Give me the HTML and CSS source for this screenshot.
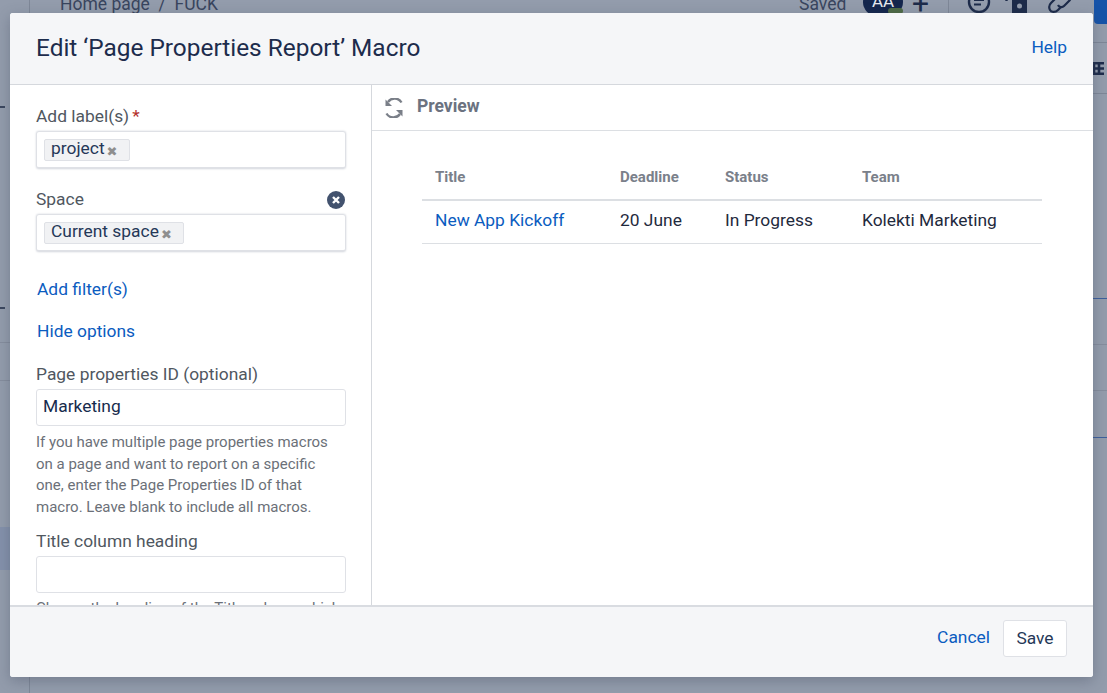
FILE: index.html
```html
<!DOCTYPE html>
<html lang="en">
<head>
    <meta charset="UTF-8">
    <meta name="viewport" content="width=device-width, initial-scale=1.0">
    <title>Edit Page Properties Report Macro</title>
    <link rel="stylesheet" href="styles.css">
</head>
<body>
    <!-- Editor page dimmed behind the dialog -->
    <div class="backdrop">
        <div class="bg-rail"></div>
        <div class="bg-crumbs">Home page &nbsp;/&nbsp; FUCK</div>
        <div class="bg-saved">Saved</div>
        <div class="bg-avatar">AA</div>
        <div class="bg-presence"></div>
        <div class="bg-plus">+</div>
        <div class="bg-divider"></div>
        <svg class="bg-icon bg-comment" viewBox="0 0 24 24"><circle cx="12" cy="12" r="10" fill="none" stroke="#1d2b4a" stroke-width="2.4"/><path d="M7 10h10M7 14.500h7" stroke="#1d2b4a" stroke-width="2.2"/></svg>
        <svg class="bg-icon bg-lock" viewBox="0 0 24 24"><path d="M7 9h15v15H7z" fill="#1d2b4a"/><circle cx="14.500" cy="16" r="2.500" fill="#939cac"/><path d="M1.500 0v11" stroke="#1d2b4a" stroke-width="2.400"/></svg>
        <svg class="bg-icon bg-link" viewBox="0 0 24 24"><path d="M11 7l3-3c3-3 7-2 8 0s1 5-1 7l-5 5c-2 2-5 1-6-1" fill="none" stroke="#1d2b4a" stroke-width="2.200"/><path d="M13 17l-3 3c-3 3-7 2-8 0s-1-5 1-7l5-5c2-2 5-1 6 1" fill="none" stroke="#1d2b4a" stroke-width="2.200"/></svg>
        <div class="bg-publish"></div>
        <div class="bg-line line-top"></div>
        <div class="bg-line line-tool"></div>
        <svg class="bg-table" viewBox="0 0 11 13"><path d="M1 1.300h12v10.400H1zM6 1v11M1 6.500h12" fill="none" stroke="#1d2b4a" stroke-width="2.600"/></svg>
        <div class="bg-blue blue-a"></div>
        <div class="bg-blue blue-b"></div>
        <div class="bg-grey grey-a"></div>
        <div class="bg-grey grey-b"></div>
        <div class="bg-tick tick-a"></div>
        <div class="bg-tick tick-b"></div>
        <div class="bg-rule rule-a"></div>
        <div class="bg-rule rule-b"></div>
        <div class="bg-selected"></div>
    </div>

    <div class="dialog">
        <header class="dialog-header">
            <h1>Edit ‘Page Properties Report’ Macro</h1>
            <a class="link" href="#">Help</a>
        </header>

        <div class="dialog-body">
            <form class="options">
                <div class="field">
                    <label>Add label(s)<span class="required">*</span></label>
                    <div class="picker">
                        <span class="tag">project<span class="tag-x">✖</span></span>
                    </div>
                </div>

                <div class="field">
                    <div class="label-row">
                        <label>Space</label>
                        <svg class="clear-icon" viewBox="0 0 18 18">
                            <circle cx="9" cy="9" r="9" fill="#42526e"/>
                            <path d="M6 6l6 6M12 6l-6 6" stroke="#fff" stroke-width="2.4"/>
                        </svg>
                    </div>
                    <div class="picker">
                        <span class="tag">Current space<span class="tag-x">✖</span></span>
                    </div>
                </div>

                <a class="link option-link first" href="#">Add filter(s)</a>
                <a class="link option-link" href="#">Hide options</a>

                <div class="field props-field">
                    <label>Page properties ID (optional)</label>
                    <input class="text-input" type="text" value="Marketing">
                    <p class="hint">If you have multiple page properties macros on a page and want to report on a specific one, enter the Page Properties ID of that macro. Leave blank to include all macros.</p>
                </div>

                <div class="field title-field">
                    <label>Title column heading</label>
                    <input class="text-input" type="text">
                    <p class="hint">Choose the heading of the Title column which</p>
                </div>
            </form>

            <section class="preview">
                <div class="preview-bar">
                    <svg class="refresh-icon" viewBox="0 0 20 20">
                        <path d="M17.5 5.5A8 8 0 0 0 4 5" fill="none" stroke="#7a7f88" stroke-width="2.4" transform="translate(0 -1)"/>
                        <path d="M1.5 1.5v6.5h6.5z" fill="#7a7f88"/>
                        <path d="M2.5 14.5A8 8 0 0 0 16 15" fill="none" stroke="#7a7f88" stroke-width="2.4" transform="translate(0 1)"/>
                        <path d="M18.5 18.5v-6.5h-6.5z" fill="#7a7f88"/>
                    </svg>
                    <span>Preview</span>
                </div>
                <div class="preview-content">
                    <table class="report">
                        <thead>
                            <tr>
                                <th class="col-title">Title</th>
                                <th class="col-deadline">Deadline</th>
                                <th class="col-status">Status</th>
                                <th>Team</th>
                            </tr>
                        </thead>
                        <tbody>
                            <tr>
                                <td><a class="link" href="#">New App Kickoff</a></td>
                                <td>20 June</td>
                                <td>In Progress</td>
                                <td>Kolekti Marketing</td>
                            </tr>
                        </tbody>
                    </table>
                </div>
            </section>
        </div>

        <footer class="dialog-footer">
            <a class="link" href="#">Cancel</a>
            <button class="save-button" type="button">Save</button>
        </footer>
    </div>
</body>
</html>
```

FILE: styles.css
```css
html, body {
    height: 100%;
}
body {
    margin: 0;
    overflow: hidden;
    background-color: #939cac;
    font-family: Roboto, Arial, sans-serif;
    font-size: 17.4px;
    color: #172b4d;
}

/* Page behind the dialog */
.backdrop {
    position: absolute;
    inset: 0;
    overflow: hidden;
    color: #26344f;
}
.bg-rail {
    position: absolute;
    left: 29px;
    top: 0;
    bottom: 0;
    width: 1px;
    background-color: #7e8797;
}
.bg-crumbs, .bg-saved {
    position: absolute;
    top: -6px;
    font-size: 17.5px;
    line-height: 20px;
    color: #39455e;
}
.bg-crumbs {
    left: 60px;
}
.bg-saved {
    left: 799px;
}
.bg-avatar {
    position: absolute;
    left: 863px;
    top: -12px;
    width: 40px;
    height: 28px;
    border-radius: 14px;
    background-color: #14264d;
    color: #e6e9ef;
    font-size: 17px;
    line-height: 27px;
    text-align: center;
}
.bg-presence {
    position: absolute;
    left: 888px;
    top: 8px;
    width: 15px;
    height: 6px;
    border-radius: 3px;
    background-color: #4e6a45;
}
.bg-plus {
    position: absolute;
    left: 912px;
    top: -11px;
    font-size: 30px;
    line-height: 30px;
    color: #1d2b4a;
}
.bg-divider {
    position: absolute;
    left: 948px;
    top: 0;
    width: 1px;
    height: 13px;
    background-color: #7e8797;
}
.bg-icon {
    position: absolute;
    top: -10px;
    width: 24px;
    height: 24px;
}
.bg-comment {
    left: 967px;
}
.bg-lock {
    left: 1005px;
}
.bg-link {
    left: 1048px;
}
.bg-publish {
    position: absolute;
    left: 1094px;
    top: -6px;
    width: 20px;
    height: 30px;
    border-radius: 4px;
    background-color: #1653a8;
}
.bg-line {
    position: absolute;
    left: 1093px;
    right: 0;
    height: 1px;
    background-color: #7e8797;
}
.line-top {
    top: 42px;
}
.line-tool {
    top: 93px;
}
.bg-table {
    position: absolute;
    left: 1093px;
    top: 62px;
    width: 11px;
    height: 13px;
}
.bg-blue, .bg-grey {
    position: absolute;
    left: 1093px;
    right: 0;
    height: 1px;
}
.bg-blue {
    background-color: #3d5f9c;
}
.bg-grey {
    background-color: #858d9d;
}
.blue-a {
    top: 298px;
}
.blue-b {
    top: 437px;
}
.grey-a {
    top: 344px;
}
.grey-b {
    top: 390px;
}
.bg-tick {
    position: absolute;
    left: 0;
    width: 5px;
    height: 2px;
    background-color: #3a465e;
}
.tick-a {
    top: 106px;
}
.tick-b {
    top: 307px;
}
.bg-rule {
    position: absolute;
    left: 0;
    width: 10px;
    height: 1px;
    background-color: #858d9d;
}
.rule-a {
    top: 342px;
}
.rule-b {
    top: 380px;
}
.bg-selected {
    position: absolute;
    left: 0;
    top: 527px;
    width: 10px;
    height: 43px;
    background-color: #8491ab;
}

/* Dialog */
.dialog {
    position: absolute;
    left: 10px;
    top: 13px;
    width: 1083px;
    height: 664px;
    display: flex;
    flex-direction: column;
    border-radius: 3px;
    background-color: #fff;
    box-shadow: 0 4px 14px rgba(60, 70, 90, 0.35);
    overflow: hidden;
}
.dialog-header {
    flex: none;
    height: 72px;
    box-sizing: border-box;
    display: flex;
    justify-content: space-between;
    align-items: center;
    padding: 0 26px 2px;
    background-color: #f5f6f8;
    border-bottom: 1px solid #d5d8dd;
}
.dialog-header h1 {
    margin: 0;
    font-size: 24.4px;
    font-weight: 400;
    color: #1d2c4c;
}
.dialog-header .link {
    margin-bottom: 2px;
}
.link {
    color: #0b5cc0;
    text-decoration: none;
}
.dialog-body {
    flex: 1;
    min-height: 0;
    display: flex;
}
.dialog-footer {
    flex: none;
    height: 72px;
    box-sizing: border-box;
    display: flex;
    justify-content: flex-end;
    align-items: center;
    gap: 13px;
    padding: 0 26px 7px;
    background-color: #f5f6f8;
    border-top: 2px solid #d9dce1;
}
.dialog-footer .link {
    margin-bottom: 3px;
}
.save-button {
    width: 64px;
    height: 37px;
    padding: 0 0 2px;
    border: 1px solid #dfe1e6;
    border-radius: 3px;
    background-color: #fff;
    font-family: inherit;
    font-size: 17.4px;
    color: #253858;
}

/* Left column */
.options {
    flex: none;
    width: 362px;
    box-sizing: border-box;
    padding: 20px 25px 0 26px;
    border-right: 1px solid #d5d8dd;
    overflow: hidden;
}
.field label {
    display: block;
    line-height: 22px;
    color: #50575f;
}
.required {
    margin-left: 3px;
    color: #b3302c;
}
.label-row {
    display: flex;
    justify-content: space-between;
    align-items: center;
}
.clear-icon {
    width: 18px;
    height: 18px;
    margin-top: 2px;
    margin-right: 1px;
}
.picker {
    box-sizing: border-box;
    height: 38px;
    margin-top: 4px;
    padding: 6px 7px;
    border: 1px solid #dfe1e6;
    border-bottom-width: 2px;
    border-radius: 3px;
    box-shadow: 0 0 2px rgba(9, 30, 66, 0.2);
}
.field + .field {
    margin-top: 19px;
}
.tag {
    display: inline-flex;
    align-items: center;
    height: 22px;
    box-sizing: border-box;
    padding: 0 11px 4px 6px;
    border: 1px solid #dfe1e6;
    border-radius: 2px;
    background-color: #f1f2f4;
    font-size: 17.4px;
    line-height: 18px;
    color: #253858;
}
.tag-x {
    margin-left: 2px;
    margin-top: 8px;
    font-family: "DejaVu Sans", sans-serif;
    font-size: 13px;
    line-height: 12px;
    color: #8f8f8f;
}
.option-link {
    display: block;
    margin-left: 1px;
    margin-top: 20px;
    line-height: 22px;
}
.option-link.first {
    margin-top: 26px;
}
.props-field {
    margin-top: 21px;
}
.text-input {
    display: block;
    width: 100%;
    box-sizing: border-box;
    height: 37px;
    margin-top: 4px;
    padding: 0 6px 4px;
    border: 1px solid #dfe1e6;
    border-radius: 3px;
    outline: none;
    font-family: inherit;
    font-size: 17.4px;
    color: #172b4d;
}
.hint {
    margin: 6px 0 0;
    font-size: 15px;
    line-height: 21.5px;
    color: #6b7078;
}
.field + .title-field {
    margin-top: 12px;
}
.title-field .hint {
    margin-top: 5px;
}

/* Right column */
.preview {
    flex: 1;
    min-width: 0;
}
.preview-bar {
    height: 46px;
    box-sizing: border-box;
    display: flex;
    align-items: center;
    gap: 13px;
    padding-left: 12px;
    border-bottom: 1px solid #dcdfe3;
    font-weight: 700;
    font-size: 17.5px;
    color: #6b7280;
}
.preview-bar span {
    margin-bottom: 3px;
}
.refresh-icon {
    width: 20px;
    height: 20px;
}
.preview-content {
    padding: 30px 51px 0 50px;
}
.report {
    width: 100%;
    border-collapse: collapse;
    table-layout: fixed;
}
.report th {
    height: 39px;
    box-sizing: border-box;
    padding: 0 13px 7px;
    text-align: left;
    font-size: 15px;
    font-weight: 700;
    color: #7a808a;
    border-bottom: 2px solid #dcdfe3;
}
.report td {
    height: 43px;
    box-sizing: border-box;
    padding: 0 13px 3px;
    border-bottom: 1px solid #dcdfe3;
    color: #1f2a3d;
}
.col-title {
    width: 185px;
}
.col-deadline {
    width: 105px;
}
.col-status {
    width: 137px;
}
```
